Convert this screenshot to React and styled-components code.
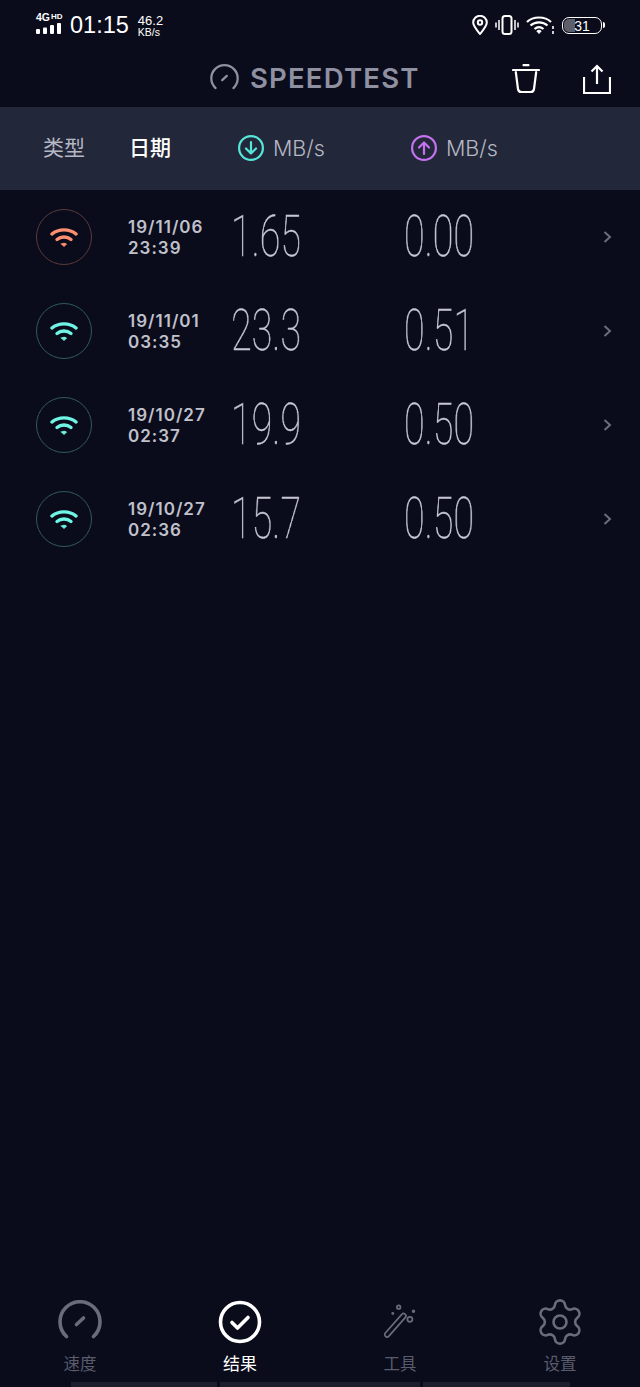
import styled, { createGlobalStyle } from "styled-components";
import { Settings } from "lucide-react";

const results = [
  { date: "19/11/06", time: "23:39", down: "1.65", up: "0.00", tone: "#ff8f70", ring: "#5a3a3c" },
  { date: "19/11/01", time: "03:35", down: "23.3", up: "0.51", tone: "#6ff5e6", ring: "#2f5a60" },
  { date: "19/10/27", time: "02:37", down: "19.9", up: "0.50", tone: "#6ff5e6", ring: "#2f5a60" },
  { date: "19/10/27", time: "02:36", down: "15.7", up: "0.50", tone: "#6ff5e6", ring: "#2f5a60" },
];

const GlobalStyle = createGlobalStyle`
  html, body {
    margin: 0;
    padding: 0;
    background: #0a0c1b;
  }
`;

const Screen = styled.div`
  width: 640px;
  height: 1387px;
  display: flex;
  flex-direction: column;
  overflow: hidden;
  background: #0a0c1b;
  font-family: "Inter", "Noto Sans CJK SC", sans-serif;
`;

const StatusBar = styled.div`
  height: 50px;
  flex: none;
  display: flex;
  align-items: center;
  padding: 0 35px 0 36px;
  color: #fff;
`;

const Signal = styled.div`
  width: 27px;
  display: flex;
  flex-direction: column;
  margin-right: 7px;
  margin-top: -4px;
`;

const SignalLabel = styled.div`
  font: 700 10.5px/11px "Liberation Sans", sans-serif;
  white-space: nowrap;
  sup {
    font-size: 8px;
    line-height: 7px;
    vertical-align: 2px;
    margin-left: 1px;
  }
`;

const Clock = styled.div`
  font: 400 23.5px/28px "Liberation Sans", sans-serif;
  margin-right: 9px;
`;

const NetSpeed = styled.div`
  flex: 1;
  font-family: "Liberation Sans", sans-serif;
  span {
    display: block;
    font-size: 13px;
    line-height: 13px;
  }
  small {
    display: block;
    font-size: 10.5px;
    line-height: 10px;
  }
`;

const StatusIcons = styled.div`
  display: flex;
  align-items: center;
  gap: 7px;
`;

const Battery = styled.div`
  position: relative;
  width: 40px;
  height: 17px;
  border: 1.5px solid #fff;
  border-radius: 7px;
  box-sizing: border-box;
  margin-right: 3px;
  font: 400 14px/14px "Liberation Sans", sans-serif;
  text-align: center;
  padding: 1px 1px;
  background: linear-gradient(90deg, #5d5f6a 32%, transparent 32%);
  background-clip: content-box;
  &::after {
    content: "";
    position: absolute;
    right: -4px;
    top: 4px;
    width: 2px;
    height: 6px;
    background: #fff;
    border-radius: 0 2px 2px 0;
  }
`;

const TitleBar = styled.div`
  height: 57px;
  flex: none;
  display: flex;
  align-items: center;
  padding-left: 210px;
  box-sizing: border-box;
`;

const Brand = styled.div`
  display: flex;
  align-items: center;
  gap: 11px;
  color: #8f90a2;
  font-size: 27.5px;
  font-weight: 600;
  letter-spacing: 1.2px;
  margin-top: -1px;
`;

const TitleActions = styled.div`
  margin-left: auto;
  display: flex;
  align-items: center;
  gap: 43px;
  padding-right: 29px;
`;

const TableHead = styled.div`
  height: 83px;
  flex: none;
  display: grid;
  grid-template-columns: 86px 109px 173px 1fr;
  align-items: center;
  padding-left: 43px;
  background: #22283a;
  color: #b5b7c4;
`;

const HeadLabel = styled.div`
  color: ${(p) => (p.$active ? "#fff" : "#b5b7c4")};
  font-size: 21px;
  font-weight: ${(p) => (p.$active ? 500 : 400)};
  font-family: "Noto Sans CJK SC", sans-serif;
  margin-bottom: 6px;
`;

const UnitLabel = styled.div`
  display: flex;
  align-items: center;
  gap: 9px;
  font-size: 21.5px;
  font-weight: 300;
  margin-bottom: 1px;
`;

const ResultList = styled.div`
  flex: 1;
`;

const ResultRow = styled.div`
  height: 94px;
  display: grid;
  grid-template-columns: 92px 103px 173px 199px 1fr;
  align-items: center;
  padding-left: 36px;
`;

const TypeBadge = styled.div`
  width: 56px;
  height: 56px;
  box-sizing: border-box;
  border: 1px solid ${(p) => p.$ring};
  border-radius: 50%;
  display: flex;
  align-items: center;
  justify-content: center;
`;

const DateCell = styled.div`
  color: #c0c1cb;
  font-size: 17px;
  line-height: 21px;
  font-weight: 600;
  letter-spacing: 1px;
  margin-top: 2px;
  white-space: nowrap;
`;

const Reading = styled.div`
  width: 110px;
  color: #c6c8d3;
  font-family: "Roboto", sans-serif;
  font-size: 58px;
  font-weight: 100;
  line-height: 58px;
  transform: scaleX(0.65);
  transform-origin: left center;
  will-change: transform;
  -webkit-text-stroke: 0.4px #c6c8d3;
  margin-top: -2px;
`;

const Chevron = styled.svg`
  display: block;
`;

const TabBar = styled.div`
  flex: none;
  height: 106px;
  display: grid;
  grid-template-columns: repeat(4, 160px);
`;

const Tab = styled.div`
  display: flex;
  flex-direction: column;
  align-items: center;
  color: ${(p) => (p.$active ? "#fff" : "#5a5b6b")};
  font-family: "Noto Sans CJK SC", sans-serif;
  font-size: ${(p) => (p.$active ? 17 : 16.5)}px;
  line-height: 20px;
`;

const TabIcon = styled.div`
  height: 48px;
  width: 60px;
  margin-top: 22px;
  margin-bottom: 7px;
  display: flex;
  align-items: center;
  justify-content: center;
  color: ${(p) => (p.$active ? "#fff" : "#6a6b7b")};
`;

const HomeStrip = styled.div`
  flex: none;
  height: 5px;
  display: flex;
  gap: 3px;
  padding-left: 71px;
`;

const StripPiece = styled.div`
  width: ${(p) => p.$w}px;
  background: #1c1e2b;
`;

const WifiMark = ({ color }) => (
  <svg width="28" height="21" viewBox="0 0 28 21" fill="none" stroke={color} strokeWidth="3.4" strokeLinecap="round">
    <path d="M2 7 C8.5 1.5 19.5 1.5 26 7" />
    <path d="M7 12.5 C11 9.2 17 9.2 21 12.5" />
    <path d="M11.5 17 L14 19.5 L16.5 17 C15 16 13 16 11.5 17Z" fill={color} strokeWidth="1" strokeLinejoin="round" />
  </svg>
);

const GaugeIcon = ({ size, stroke }) => (
  <svg width={size} height={size} viewBox="0 0 44 44" fill="none" stroke="currentColor" strokeWidth={stroke} strokeLinecap="round">
    <path d="M8.5 36.5 A20 20 0 1 1 35.5 36.5" />
    <path d="M18.5 24.5 L25.5 18" />
  </svg>
);

const DirectionIcon = ({ color, up }) => (
  <svg width="26" height="26" viewBox="0 0 26 26" fill="none" stroke={color} strokeWidth="2.2" strokeLinecap="round" strokeLinejoin="round">
    <circle cx="13" cy="13" r="11.9" />
    {up ? <path d="M13 19 V7.5 M8 12.5 L13 7.5 L18 12.5" /> : <path d="M13 7 V18.5 M8 13.5 L13 18.5 L18 13.5" />}
  </svg>
);

const WandIcon = () => (
  <svg width="36" height="36" viewBox="0 0 40 40" fill="none" stroke="currentColor" strokeWidth="1.9" strokeLinecap="round" strokeLinejoin="round">
    <path d="M3.2 32.8 L22 11.6 A2.5 2.5 0 0 1 26 14.8 L7.4 36 A2.7 2.7 0 0 1 3.2 32.8Z" />
    <circle cx="18.5" cy="3.5" r="2" />
    <circle cx="31" cy="17" r="2.8" />
    <circle cx="12" cy="10.5" r="0.7" />
    <circle cx="35" cy="8" r="1" />
  </svg>
);

const App = () => (
  <Screen>
    <GlobalStyle />
    <StatusBar>
      <Signal>
        <SignalLabel>4G<sup>HD</sup></SignalLabel>
        <svg width="26" height="11" viewBox="0 0 26 11" fill="#fff">
          <rect x="0" y="6" width="4" height="5" rx="1" />
          <rect x="7" y="4.5" width="4" height="6.5" rx="1" />
          <rect x="14" y="2" width="4" height="9" rx="1" />
          <rect x="21" y="0" width="4" height="11" rx="1" />
        </svg>
      </Signal>
      <Clock>01:15</Clock>
      <NetSpeed>
        <span>46.2</span>
        <small>KB/s</small>
      </NetSpeed>
      <StatusIcons>
        <svg width="16" height="20" viewBox="0 0 16 20" fill="none" stroke="#fff" strokeWidth="2">
          <path d="M8 19 C4 14 1.2 11 1.2 7.6 A6.8 6.8 0 0 1 14.8 7.6 C14.8 11 12 14 8 19Z" strokeLinejoin="round" />
          <circle cx="8" cy="7.5" r="2.2" />
        </svg>
        <svg width="24" height="20" viewBox="0 0 24 20" fill="none" stroke="#fff" strokeWidth="2">
          <rect x="7.5" y="1" width="9" height="18" rx="2.5" />
          <path d="M4 5 V15 M1 7.5 V12.5 M20 5 V15 M23 7.5 V12.5" strokeWidth="1.5" />
        </svg>
        <svg width="29" height="20" viewBox="0 0 29 20" fill="none" stroke="#fff" strokeWidth="2.2">
          <path d="M1 7 C7 1 19 1 25 7" />
          <path d="M4.5 10.5 C9 6.2 17 6.2 21.5 10.5" />
          <path d="M8.5 14 C11.5 11.5 14.5 11.5 17.5 14" />
          <path d="M13 18.5 L10.8 16 C12 15 14 15 15.2 16Z" fill="#fff" strokeWidth="1" />
          <path d="M27 11 V14 M27 16 V19" strokeWidth="1.6" />
        </svg>
        <Battery>31</Battery>
      </StatusIcons>
    </StatusBar>

    <TitleBar>
      <Brand>
        <GaugeIcon size={29} stroke={3.4} />
        SPEEDTEST
      </Brand>
      <TitleActions>
        <svg width="28" height="30" viewBox="0 0 28 30" fill="none" stroke="#fff" strokeWidth="2.2" strokeLinecap="round" strokeLinejoin="round">
          <path d="M1 6 H27" />
          <path d="M11.5 1.2 H16.5" />
          <path d="M3.8 8 L6 25 A3.5 3.5 0 0 0 9.5 28 H18.5 A3.5 3.5 0 0 0 22 25 L24.2 8" />
        </svg>
        <svg width="28" height="30" viewBox="0 0 28 30" fill="none" stroke="#fff" strokeWidth="2.2" strokeLinejoin="miter">
          <path d="M14 2 V20 M8.5 7.5 L14 2 L19.5 7.5" />
          <path d="M1 13 V29 H27 V13" />
        </svg>
      </TitleActions>
    </TitleBar>

    <TableHead>
      <HeadLabel>类型</HeadLabel>
      <HeadLabel $active>日期</HeadLabel>
      <UnitLabel>
        <DirectionIcon color="#55e8da" />
        MB/s
      </UnitLabel>
      <UnitLabel>
        <DirectionIcon color="#c572f0" up />
        MB/s
      </UnitLabel>
    </TableHead>

    <ResultList>
      {results.map((r) => (
        <ResultRow key={r.date + r.time}>
          <TypeBadge $ring={r.ring}>
            <WifiMark color={r.tone} />
          </TypeBadge>
          <DateCell>
            {r.date}
            <br />
            {r.time}
          </DateCell>
          <Reading>{r.down}</Reading>
          <Reading>{r.up}</Reading>
          <Chevron width="9" height="12" viewBox="0 0 9 12" fill="none" stroke="#6c6d7c" strokeWidth="2">
            <path d="M1.5 1 L7 6 L1.5 11" />
          </Chevron>
        </ResultRow>
      ))}
    </ResultList>

    <TabBar>
      <Tab>
        <TabIcon>
          <GaugeIcon size={44} stroke={3.6} />
        </TabIcon>
        速度
      </Tab>
      <Tab $active>
        <TabIcon $active>
          <svg width="44" height="44" viewBox="0 0 44 44" fill="none" stroke="currentColor" strokeLinecap="round" strokeLinejoin="round">
            <circle cx="22" cy="22" r="19.5" strokeWidth="3.6" />
            <path d="M14 22.5 L19.5 28 L30 17.5" strokeWidth="3.6" />
          </svg>
        </TabIcon>
        结果
      </Tab>
      <Tab>
        <TabIcon>
          <WandIcon />
        </TabIcon>
        工具
      </Tab>
      <Tab>
        <TabIcon>
          <Settings size={52} strokeWidth={1.2} />
        </TabIcon>
        设置
      </Tab>
    </TabBar>

    <HomeStrip>
      <StripPiece $w={146} />
      <StripPiece $w={200} />
      <StripPiece $w={147} />
    </HomeStrip>
  </Screen>
);

export default App;
